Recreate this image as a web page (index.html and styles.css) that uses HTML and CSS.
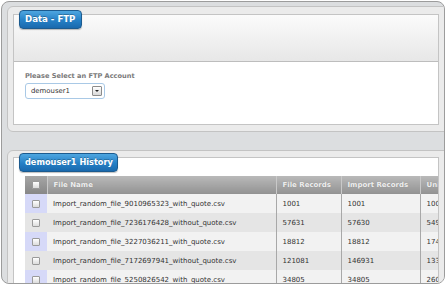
FILE: index.html
```html
<!DOCTYPE html>
<html lang="en">
<head>
    <meta charset="UTF-8">
    <title>Data - FTP</title>
    <link rel="stylesheet" href="styles.css">
</head>
<body>
    <div class="frame">
        <div class="panel">
            <div class="tab">Data - FTP</div>
            <div class="box box-ftp">
                <div class="box-head"></div>
                <div class="box-body">
                    <div class="label">Please Select an FTP Account</div>
                    <div class="select">
                        <span>demouser1</span>
                        <span class="arrow"></span>
                    </div>
                </div>
            </div>
        </div>

        <div class="panel panel-history">
            <div class="tab tab-history">demouser1 History</div>
            <div class="box box-table">
                <table class="grid">
                    <colgroup>
                        <col class="c-check">
                        <col class="c-name">
                        <col class="c-file">
                        <col class="c-import">
                        <col class="c-unique">
                    </colgroup>
                    <thead>
                        <tr>
                            <th class="check"><span class="cb"></span></th>
                            <th>File Name</th>
                            <th>File Records</th>
                            <th>Import Records</th>
                            <th>Unique Records</th>
                        </tr>
                    </thead>
                    <tbody>
                        <tr>
                            <td class="check"><span class="cb"></span></td>
                            <td>Import_random_file_9010965323_with_quote.csv</td>
                            <td class="num">1001</td>
                            <td class="num">1001</td>
                            <td class="num">1001</td>
                        </tr>
                        <tr>
                            <td class="check"><span class="cb"></span></td>
                            <td>Import_random_file_7236176428_without_quote.csv</td>
                            <td class="num">57631</td>
                            <td class="num">57630</td>
                            <td class="num">54912</td>
                        </tr>
                        <tr>
                            <td class="check"><span class="cb"></span></td>
                            <td>Import_random_file_3227036211_with_quote.csv</td>
                            <td class="num">18812</td>
                            <td class="num">18812</td>
                            <td class="num">17443</td>
                        </tr>
                        <tr>
                            <td class="check"><span class="cb"></span></td>
                            <td>Import_random_file_7172697941_without_quote.csv</td>
                            <td class="num">121081</td>
                            <td class="num">146931</td>
                            <td class="num">133025</td>
                        </tr>
                        <tr>
                            <td class="check"><span class="cb"></span></td>
                            <td>Import_random_file_5250826542_with_quote.csv</td>
                            <td class="num">34805</td>
                            <td class="num">34805</td>
                            <td class="num">26031</td>
                        </tr>
                    </tbody>
                </table>
            </div>
        </div>
    </div>
</body>
</html>
```

FILE: styles.css
```css
* {
    box-sizing: border-box;
}
body {
    margin: 0;
    width: 446px;
    height: 285px;
    overflow: hidden;
    background: #ffffff;
    font-family: "DejaVu Sans", Verdana, sans-serif;
}
.frame {
    margin: 1px 0 0 1px;
    width: 444px;
    height: 283px;
    border: 1px solid #9c9c9c;
    border-radius: 8px;
    background: #dcdee0;
    padding: 4px 0 0 5px;
    overflow: hidden;
}
.panel {
    position: relative;
    margin-right: -30px;
    border: 1px solid #c3c3c3;
    border-radius: 6px;
    background: #ebebeb;
    padding: 7px 0 6px 5px;
}
.panel-history {
    margin-top: 18px;
    padding-top: 6px;
}
.tab {
    position: absolute;
    left: 11px;
    top: 3px;
    height: 19px;
    padding: 0 6px 0 5px;
    border: 1px solid #1c5b8f;
    border-radius: 4px;
    background: linear-gradient(#4ea6e0, #2580c6 55%, #1a69ad);
    box-shadow: 0 1px 1px rgba(0, 0, 0, 0.25);
    color: #ffffff;
    font-weight: bold;
    font-size: 8.6px;
    line-height: 17px;
    white-space: nowrap;
    text-shadow: 0 -1px 0 rgba(0, 0, 0, 0.25);
    z-index: 2;
}
.tab-history {
    top: 2px;
    width: 99px;
    font-size: 8.2px;
}
.box {
    width: 426px;
    border: 1px solid #c4c4c4;
    background: #ffffff;
    overflow: hidden;
}
.box-ftp {
    height: 111px;
}
.box-head {
    height: 47px;
    border-bottom: 1px solid #bdbdbd;
    background: linear-gradient(#fbfbfb, #e7e7e7);
}
.box-body {
    padding: 10px 0 0 11px;
}
.label {
    color: #7a7a7a;
    font-weight: bold;
    font-size: 6.6px;
    line-height: 9px;
}
.select {
    display: flex;
    align-items: center;
    justify-content: space-between;
    margin-top: 2px;
    width: 80px;
    height: 16px;
    border: 1px solid #a9c9e6;
    border-radius: 3px;
    padding: 0 2px 0 5px;
    color: #333333;
    font-size: 6.9px;
}
.arrow {
    position: relative;
    width: 10px;
    height: 10px;
    border: 1px solid #8c8c8c;
    border-radius: 1px;
    background: linear-gradient(#ffffff, #d9d9d9);
}
.arrow::after {
    content: "";
    position: absolute;
    left: 2px;
    top: 3px;
    border-left: 2px solid transparent;
    border-right: 2px solid transparent;
    border-top: 2px solid #222222;
}
.box-table {
    height: 200px;
    padding: 18px 0 0 11px;
}
.grid {
    border-collapse: collapse;
    table-layout: fixed;
    width: 480px;
    font-size: 7px;
    color: #333333;
}
.c-check { width: 22px; }
.c-name { width: 229px; }
.c-file { width: 65px; }
.c-import { width: 79px; }
.c-unique { width: 85px; }
.grid th {
    height: 18px;
    padding: 0 0 0 6px;
    text-align: left;
    font-weight: bold;
    color: #eeeeee;
    background: linear-gradient(#b9b9b9, #929292);
    border-left: 1px solid #c9c9c9;
    text-shadow: 0 0 1px #888888;
    white-space: nowrap;
    overflow: hidden;
}
.grid th.check {
    background: linear-gradient(#a6a6a6, #878787);
    border-left: none;
}
.grid td {
    height: 19px;
    padding: 0 0 0 6px;
    white-space: nowrap;
    overflow: hidden;
    background: #f2f2f2;
}
.grid td.num {
    border-left: 1px solid #a8a8a8;
}
.grid tbody tr:nth-child(even) td {
    background: #e5e5e5;
}
.grid td.check,
.grid th.check {
    padding: 0;
    text-align: center;
}
.grid tbody tr:nth-child(odd) td.check {
    background: #d6d9f8;
}
.cb {
    display: inline-block;
    vertical-align: middle;
    width: 8px;
    height: 8px;
    border: 1px solid #9a9a9a;
    border-radius: 1px;
    background: linear-gradient(#ffffff, #dcdcdc);
}
```
